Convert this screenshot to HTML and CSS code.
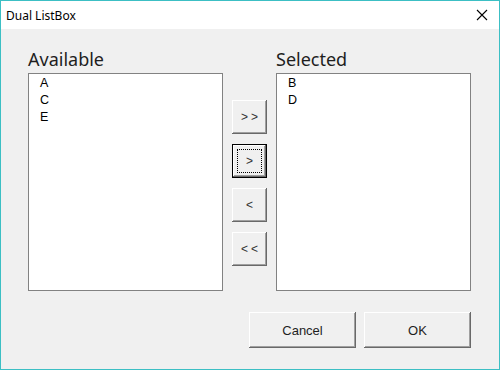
FILE: index.html
```html
<!DOCTYPE html>
<html>
<head>
<meta charset="utf-8">
<link rel="stylesheet" href="styles.css">
</head>
<body>
<div class="window">
  <div class="titlebar">
    <span class="title">Dual ListBox</span>
    <svg class="close" width="12" height="12" viewBox="0 0 12 12"><path d="M1 1 L11 11 M11 1 L1 11" stroke="#000" stroke-width="1.1" fill="none"/></svg>
  </div>
  <div class="client">
    <div class="lists">
      <div class="col">
        <div class="label">Available</div>
        <div class="listbox">
          <div class="item">A</div>
          <div class="item">C</div>
          <div class="item">E</div>
        </div>
      </div>
      <div class="movers">
        <button class="btn small">&gt;&gt;</button>
        <button class="btn small focused"><span class="focusrect">&gt;</span></button>
        <button class="btn small">&lt;</button>
        <button class="btn small">&lt;&lt;</button>
      </div>
      <div class="col">
        <div class="label">Selected</div>
        <div class="listbox">
          <div class="item">B</div>
          <div class="item">D</div>
        </div>
      </div>
    </div>
    <div class="footer">
      <button class="btn wide">Cancel</button>
      <button class="btn wide">OK</button>
    </div>
  </div>
</div>
</body>
</html>
```
FILE: styles.css
```css
html, body {
  margin: 0;
  padding: 0;
}
body {
  width: 500px;
  height: 370px;
  overflow: hidden;
}
.window {
  width: 500px;
  height: 370px;
  box-sizing: border-box;
  border: 1px solid #3cbfc4;
  background: #f0f0f0;
  display: flex;
  flex-direction: column;
}
.titlebar {
  height: 28px;
  background: #fff;
  display: flex;
  align-items: center;
  justify-content: space-between;
  padding: 0 11px 0 5px;
}
.title {
  font-family: "Noto Sans", sans-serif;
  font-size: 12px;
  color: #000;
}
.close {
  display: block;
}
.client {
  flex: 1;
  padding: 0 0 0 27px;
}
.lists {
  display: flex;
  gap: 9px;
  align-items: stretch;
}
.col {
  width: 195px;
  display: flex;
  flex-direction: column;
}
.label {
  font-family: "Noto Sans", sans-serif;
  font-size: 18px;
  color: #1e1e1e;
  height: 26px;
  line-height: 24px;
  padding-top: 18px;
}
.listbox {
  height: 218px;
  box-sizing: border-box;
  background: #fff;
  border: 1px solid #828282;
  padding: 1px 0 0 11px;
}
.item {
  font-family: "Liberation Sans", sans-serif;
  font-size: 12.5px;
  height: 17px;
  line-height: 16px;
  color: #000;
}
.movers {
  width: 35px;
  padding-top: 71px;
  display: flex;
  flex-direction: column;
  gap: 10px;
}
.btn {
  margin: 0;
  padding: 0;
  border: none;
  background: #f0f0f0;
  box-shadow: inset -1px -1px #696969, inset 1px 1px #fff, inset -2px -2px #a0a0a0;
  font-family: "Liberation Sans", sans-serif;
  font-size: 13px;
  color: #1e1e1e;
  display: flex;
  align-items: center;
  justify-content: center;
}
.small {
  width: 35px;
  height: 34px;
  letter-spacing: 3px;
  padding-left: 3px;
  font-size: 12px;
  color: #333;
}
.focused {
  box-shadow: inset 0 0 0 1px #000, inset -2px -2px #696969, inset 2px 2px #fff, inset -3px -3px #a0a0a0;
  padding-left: 0;
}
.focusrect {
  width: 25px;
  height: 24px;
  box-sizing: border-box;
  border: 1px dotted #000;
  display: flex;
  align-items: center;
  justify-content: center;
  letter-spacing: 0;
}
.footer {
  display: flex;
  justify-content: flex-end;
  gap: 8px;
  width: 443px;
  padding-top: 21px;
}
.wide {
  width: 107px;
  height: 36px;
}
```
